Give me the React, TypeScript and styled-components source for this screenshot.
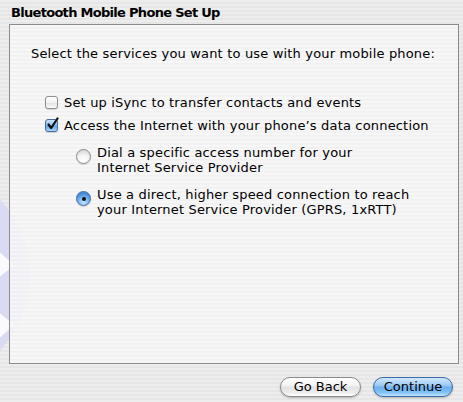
import React from 'react';
import styled, { createGlobalStyle } from 'styled-components';

const GlobalStyle = createGlobalStyle`
  html, body {
    margin: 0;
    padding: 0;
  }
  body {
    font-family: "DejaVu Sans", "Liberation Sans", sans-serif;
    font-size: 13px;
    color: #000;
  }
`;

const Window = styled.div`
  position: relative;
  width: 463px;
  height: 402px;
  overflow: hidden;
  display: flex;
  flex-direction: column;
  background: repeating-linear-gradient(
    to bottom,
    #ededed 0px,
    #ededed 2px,
    #e6e6e6 2px,
    #e6e6e6 4px
  );
`;

const Watermark = styled.svg`
  position: absolute;
  left: -190px;
  top: 165px;
  width: 220px;
  height: 220px;
  z-index: 0;
`;

const Title = styled.h1`
  position: relative;
  z-index: 1;
  flex: none;
  margin: 0;
  padding: 5px 0 0 11px;
  height: 19px;
  font-size: 13px;
  line-height: 16px;
  font-weight: bold;
  letter-spacing: -0.7px;
`;

const Panel = styled.div`
  position: relative;
  z-index: 1;
  flex: none;
  box-sizing: border-box;
  margin-left: 9px;
  width: 450px;
  height: 340px;
  border: 1px solid #8c8c8c;
  background: repeating-linear-gradient(
    to bottom,
    rgba(250, 250, 250, 0.8) 0px,
    rgba(250, 250, 250, 0.8) 2px,
    rgba(244, 244, 244, 0.8) 2px,
    rgba(244, 244, 244, 0.8) 4px
  );
  padding: 21px 0 0 21px;
  letter-spacing: 0.17px;
`;

const Prompt = styled.p`
  margin: 0 0 33px;
  line-height: 16px;
`;

const OptionList = styled.div`
  display: flex;
  flex-direction: column;
  padding-left: 14px;
`;

const Row = styled.label<{ $indent?: number; $gap?: number }>`
  display: flex;
  align-items: flex-start;
  gap: 6px;
  margin-left: ${(p) => p.$indent ?? 0}px;
  margin-bottom: ${(p) => p.$gap ?? 0}px;
  line-height: 16px;
`;

const RowText = styled.span`
  line-height: 15px;
`;

const CheckBox = styled.span<{ $checked?: boolean }>`
  flex: none;
  width: 11px;
  height: 11px;
  margin-top: 1px;
  border-radius: 3px;
  border: 1px solid ${(p) => (p.$checked ? '#4b6c9e' : '#8e8e8e')};
  background: ${(p) =>
    p.$checked
      ? 'linear-gradient(to bottom, #c9e3fb 0%, #8fc3f1 45%, #5ea4e6 55%, #a8d6fb 100%)'
      : 'linear-gradient(to bottom, #ffffff 0%, #f1f1f1 50%, #e2e2e2 55%, #fbfbfb 100%)'};
  box-shadow: 0 1px 1px rgba(0, 0, 0, 0.15);
  position: relative;
  svg {
    position: absolute;
    left: 0px;
    top: -3px;
  }
`;

const Radio = styled.span<{ $selected?: boolean }>`
  flex: none;
  width: 13px;
  height: 13px;
  margin-top: 4px;
  border-radius: 50%;
  border: 1px solid ${(p) => (p.$selected ? '#4a6a9c' : '#8c8c8c')};
  background: ${(p) =>
    p.$selected
      ? 'radial-gradient(circle at 50% 80%, #bfe3ff 0%, #7cb8ef 40%, #3f88d8 75%, #6aa6e4 100%)'
      : 'radial-gradient(circle at 50% 80%, #ffffff 0%, #f4f4f4 45%, #d9d9d9 80%, #cfcfcf 100%)'};
  box-shadow: 0 1px 1px rgba(0, 0, 0, 0.15);
  display: flex;
  align-items: center;
  justify-content: center;
  &::after {
    content: '';
    width: 4px;
    height: 4px;
    border-radius: 50%;
    background: ${(p) => (p.$selected ? '#111' : 'transparent')};
  }
`;

const Footer = styled.div`
  position: relative;
  z-index: 1;
  flex: none;
  display: flex;
  justify-content: flex-end;
  gap: 12px;
  padding: 13px 10px 0 0;
`;

const Button = styled.button<{ $primary?: boolean }>`
  width: ${(p) => (p.$primary ? 80 : 81)}px;
  height: 20px;
  padding: 0 0 1px;
  border-radius: 10px;
  font-family: inherit;
  font-size: 13px;
  color: #000;
  border: 1px solid ${(p) => (p.$primary ? '#3c6aa6' : '#8a8a8a')};
  background: ${(p) =>
    p.$primary
      ? 'linear-gradient(to bottom, #d2e8fb 0%, #9ccbf3 40%, #6eb0ee 52%, #7fc2f6 80%, #c3e6ff 100%)'
      : 'linear-gradient(to bottom, #ffffff 0%, #f4f4f4 40%, #e3e3e3 52%, #ececec 80%, #ffffff 100%)'};
  box-shadow: 0 1px 2px rgba(0, 0, 0, 0.25);
`;

const CheckMark = () => (
  <svg width="14" height="14" viewBox="0 0 14 14">
    <path
      d="M2.5 7.5 L5.2 11 L11.5 1.5"
      fill="none"
      stroke="#111"
      strokeWidth="2.2"
      strokeLinecap="round"
      strokeLinejoin="round"
    />
  </svg>
);

export default function App() {
  return (
    <>
      <GlobalStyle />
      <Window>
        <Watermark viewBox="0 0 220 220">
          <circle cx="110" cy="110" r="110" fill="#dadaf3" />
          <path
            d="M150 60 L150 200 L195 160 L105 90 M105 170 L195 100 L150 60"
            fill="none"
            stroke="#ffffff"
            strokeWidth="12"
            strokeOpacity="0.85"
          />
        </Watermark>
        <Title>Bluetooth Mobile Phone Set Up</Title>
        <Panel>
          <Prompt>Select the services you want to use with your mobile phone:</Prompt>
          <OptionList>
            <Row $gap={8}>
              <CheckBox />
              <RowText>Set up iSync to transfer contacts and events</RowText>
            </Row>
            <Row $gap={12}>
              <CheckBox $checked>
                <CheckMark />
              </CheckBox>
              <RowText>Access the Internet with your phone’s data connection</RowText>
            </Row>
            <Row $indent={31} $gap={12}>
              <Radio />
              <RowText>
                Dial a specific access number for your
                <br />
                Internet Service Provider
              </RowText>
            </Row>
            <Row $indent={31}>
              <Radio $selected />
              <RowText>
                Use a direct, higher speed connection to reach
                <br />
                your Internet Service Provider (GPRS, 1xRTT)
              </RowText>
            </Row>
          </OptionList>
        </Panel>
        <Footer>
          <Button>Go Back</Button>
          <Button $primary>Continue</Button>
        </Footer>
      </Window>
    </>
  );
}
